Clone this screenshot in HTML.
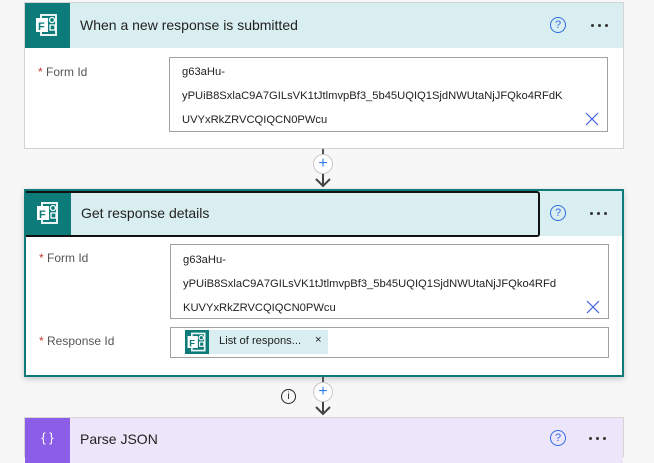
<!DOCTYPE html>
<html><head><style>
*{box-sizing:border-box;margin:0;padding:0}
html,body{width:654px;height:441px}
body{background:#f7f7f7;font-family:"Liberation Sans",sans-serif;position:relative;overflow:hidden;color:#222}
.abs{position:absolute}
.card{position:absolute;left:24px;width:600px;background:#fff;border:1px solid #d4d4d4}
.hdr{position:absolute;left:0;top:0;right:0;height:45px;background:#d9eef0}
.ic{position:absolute;left:0;top:0;width:45px;height:45px;background:#0d7b7a}
.title{position:absolute;left:55px;top:14px;font-size:14px;color:#222}
.lbl{position:absolute;left:13px;font-size:12px;color:#555}
.lbl b{color:#c43b3b;font-weight:normal}
.inp{position:absolute;left:144px;width:439px;border:1px solid #a0a0a0;background:#fff;font-size:11.2px;color:#222}
.inp div{position:absolute;left:12px}
.x{position:absolute;right:8px;width:14px;height:14px}
.q{position:absolute;width:16px;height:16px;border:1.3px solid #2e6be6;border-radius:50%;color:#2e6be6;font-size:11px;text-align:center;line-height:14px}
.dots{position:absolute;width:20px;height:4px}
.dots i{position:absolute;top:0;width:3px;height:3px;border-radius:50%;background:#333}
</style></head><body>
<svg width="0" height="0" style="position:absolute"><defs>
<g id="fi"><rect x="15" y="11" width="17" height="22" fill="#fff" opacity="0.9"/><rect x="17" y="13" width="13" height="18" fill="#0d7b7a"/><rect x="11" y="15" width="12" height="14" fill="#fff"/><text x="13" y="27" font-family="Liberation Sans" font-weight="bold" font-size="11" fill="#0d7b7a">F</text><circle cx="27" cy="17" r="2.5" fill="none" stroke="#fff" stroke-width="1.3"/><rect x="25" y="22" width="5" height="5" fill="none" stroke="#fff" stroke-width="1.3"/></g>
</defs></svg>

<div class="card" style="top:2px;height:147px">
 <div class="hdr"><div class="ic"><svg width="45" height="45"><use href="#fi"/></svg></div>
 <div class="title">When a new response is submitted</div>
 <div class="q" style="left:525px;top:14px">?</div>
 <div class="dots" style="left:566px;top:21px"><i style="left:0"></i><i style="left:7px"></i><i style="left:14px"></i></div></div>
 <div class="lbl" style="top:62px"><b>*</b> Form Id</div>
 <div class="inp" style="top:54px;height:75px">
  <div style="top:8px">g63aHu-</div>
  <div style="top:32px">yPUiB8SxlaC9A7GILsVK1tJtlmvpBf3_5b45UQIQ1SjdNWUtaNjJFQko4RFdK</div>
  <div style="top:56px">UVYxRkZRVCQIQCN0PWcu</div>
  <svg class="x" style="top:54px" viewBox="0 0 14 14"><path d="M1 1L13 13M13 1L1 13" stroke="#3b5fe0" stroke-width="1.2"/></svg>
 </div>
</div>

<div class="abs" style="left:322px;top:149px;width:1.5px;height:6px;background:#555"></div>
<div class="abs" style="left:313px;top:154px;width:20px;height:20px;border:1.5px solid #c8c8c8;border-radius:50%;background:#fff;color:#2e7de6;text-align:center;line-height:17px;font-size:16px">+</div>
<svg class="abs" style="left:313px;top:174px" width="20" height="14"><path d="M10 0V11M3 5L10 12L17 5" stroke="#444" stroke-width="2" fill="none"/></svg>

<div class="card" style="top:189px;height:188px;border:2px solid #0d7b7a;box-shadow:0 2px 6px rgba(0,0,0,.2)">
 <div class="hdr" style="top:0;height:45px"><div class="ic"><svg width="45" height="45"><use href="#fi"/></svg></div>
 <div class="abs" style="left:0;top:0;width:514px;height:46px;border:2px solid #111;border-left:none;border-radius:0 3px 3px 0"></div>
 <div class="title">Get response details</div>
 <div class="q" style="left:524px;top:14px">?</div>
 <div class="dots" style="left:564px;top:21px"><i style="left:0"></i><i style="left:7px"></i><i style="left:14px"></i></div></div>
 <div class="lbl" style="top:60px"><b>*</b> Form Id</div>
 <div class="inp" style="top:53px;height:75px">
  <div style="top:9px">g63aHu-</div>
  <div style="top:33px">yPUiB8SxlaC9A7GILsVK1tJtlmvpBf3_5b45UQIQ1SjdNWUtaNjJFQko4RFd</div>
  <div style="top:57px">KUVYxRkZRVCQIQCN0PWcu</div>
  <svg class="x" style="top:55px" viewBox="0 0 14 14"><path d="M1 1L13 13M13 1L1 13" stroke="#3b5fe0" stroke-width="1.2"/></svg>
 </div>
 <div class="lbl" style="top:143px"><b>*</b> Response Id</div>
 <div class="inp" style="top:136px;height:31px">
  <div style="left:14px;top:2px;width:143px;height:24px;background:#d9eef0">
   <div style="left:0;top:0;width:24px;height:24px;background:#0d7b7a"><svg width="24" height="24" viewBox="8 8 28 28"><use href="#fi"/></svg></div>
   <div style="left:34px;top:5px;white-space:nowrap">List of respons...</div>
   <div style="left:130px;top:4px">×</div>
  </div>
 </div>
</div>

<div class="abs" style="left:322px;top:377px;width:1.5px;height:6px;background:#555"></div>
<div class="abs" style="left:281px;top:389px;width:15px;height:15px;border:1.2px solid #222;border-radius:50%;font-size:10px;text-align:center;line-height:13px">i</div>
<div class="abs" style="left:313px;top:382px;width:20px;height:20px;border:1.5px solid #c8c8c8;border-radius:50%;background:#fff;color:#2e7de6;text-align:center;line-height:17px;font-size:16px">+</div>
<svg class="abs" style="left:313px;top:402px" width="20" height="14"><path d="M10 0V11M3 5L10 12L17 5" stroke="#444" stroke-width="2" fill="none"/></svg>

<div class="card" style="top:417px;height:40px">
 <div class="hdr" style="background:#ede6fa"><div class="ic" style="background:#8c5ee8;color:#fff;font-size:13px;text-align:center;line-height:40px">{ }</div>
 <div class="title" style="top:13px">Parse JSON</div>
 <div class="q" style="left:525px;top:12px">?</div>
 <div class="dots" style="left:564px;top:19px"><i style="left:0"></i><i style="left:7px"></i><i style="left:14px"></i></div></div>
</div>
</body></html>
